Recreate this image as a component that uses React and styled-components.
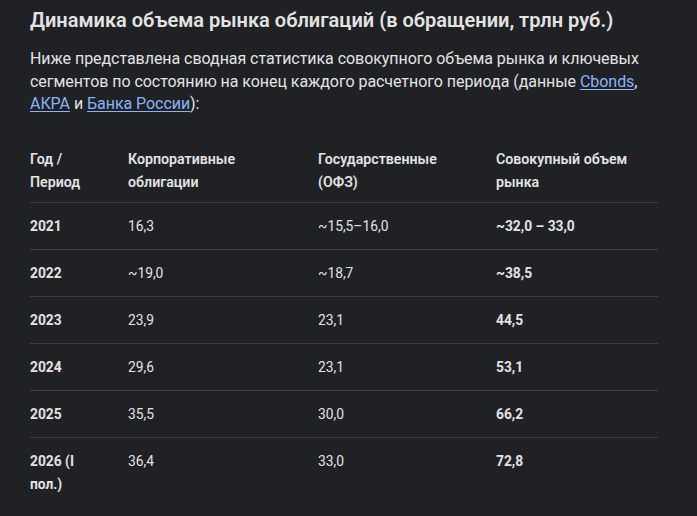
import styled, { createGlobalStyle } from 'styled-components';

const GlobalStyle = createGlobalStyle`
  html, body {
    margin: 0;
    padding: 0;
    background: #202124;
  }
  body {
    font-family: Roboto, 'Noto Sans', sans-serif;
    color: #e3e3e3;
  }
`;

const Page = styled.div`
  padding: 6px 39px 0 30px;
  min-height: 516px;
  box-sizing: border-box;
`;

const Title = styled.h2`
  margin: 0;
  font-size: 20px;
  line-height: 28px;
  font-weight: 600;
  color: #e3e3e3;
`;

const Intro = styled.p`
  margin: 14px 0 0;
  font-size: 16px;
  line-height: 22.7px;
  letter-spacing: -0.05px;
  color: #e3e3e3;
`;

const Link = styled.a`
  color: #8ab4f8;
  text-decoration: underline;
  text-underline-offset: 2px;
`;

const Table = styled.table`
  width: 628px;
  margin-top: 32px;
  border-collapse: collapse;
  font-size: 13.8px;
  line-height: 23px;
`;

const Th = styled.th`
  text-align: left;
  vertical-align: top;
  font-size: 14.2px;
  font-weight: 600;
  padding: 0 20px 8px 0;
  width: ${p => p.$w}px;
  box-sizing: border-box;
  border-bottom: 1px solid #3c3d42;
`;

const Td = styled.td`
  vertical-align: top;
  padding: 12px 24px 11px 0;
  font-weight: ${p => (p.$bold ? 700 : 400)};
  border-bottom: ${p => (p.$last ? 'none' : '1px solid #3c3d42')};
`;

const columns = [
  { label: ['Год /', 'Период'], w: 98 },
  { label: ['Корпоративные', 'облигации'], w: 190 },
  { label: ['Государственные', '(ОФЗ)'], w: 178 },
  { label: ['Совокупный объем', 'рынка'], w: 162 },
];

const rows = [
  ['2021', '16,3', '~15,5–16,0', '~32,0 – 33,0'],
  ['2022', '~19,0', '~18,7', '~38,5'],
  ['2023', '23,9', '23,1', '44,5'],
  ['2024', '29,6', '23,1', '53,1'],
  ['2025', '35,5', '30,0', '66,2'],
  ['2026 (I пол.)', '36,4', '33,0', '72,8'],
];

export default function App() {
  return (
    <Page>
      <GlobalStyle />
      <Title>Динамика объема рынка облигаций (в обращении, трлн руб.)</Title>
      <Intro>
        Ниже представлена сводная статистика совокупного объема рынка и ключевых
        сегментов по состоянию на конец каждого расчетного периода (данные{' '}
        <Link href="#">Cbonds</Link>, <Link href="#">АКРА</Link> и{' '}
        <Link href="#">Банка России</Link>):
      </Intro>
      <Table>
        <thead>
          <tr>
            {columns.map(c => (
              <Th key={c.label[0]} $w={c.w}>
                {c.label[0]}
                <br />
                {c.label[1]}
              </Th>
            ))}
          </tr>
        </thead>
        <tbody>
          {rows.map((r, i) => {
            const last = i === rows.length - 1;
            return (
              <tr key={r[0]}>
                <Td $bold $last={last}>{r[0]}</Td>
                <Td $last={last}>{r[1]}</Td>
                <Td $last={last}>{r[2]}</Td>
                <Td $bold $last={last}>{r[3]}</Td>
              </tr>
            );
          })}
        </tbody>
      </Table>
    </Page>
  );
}
